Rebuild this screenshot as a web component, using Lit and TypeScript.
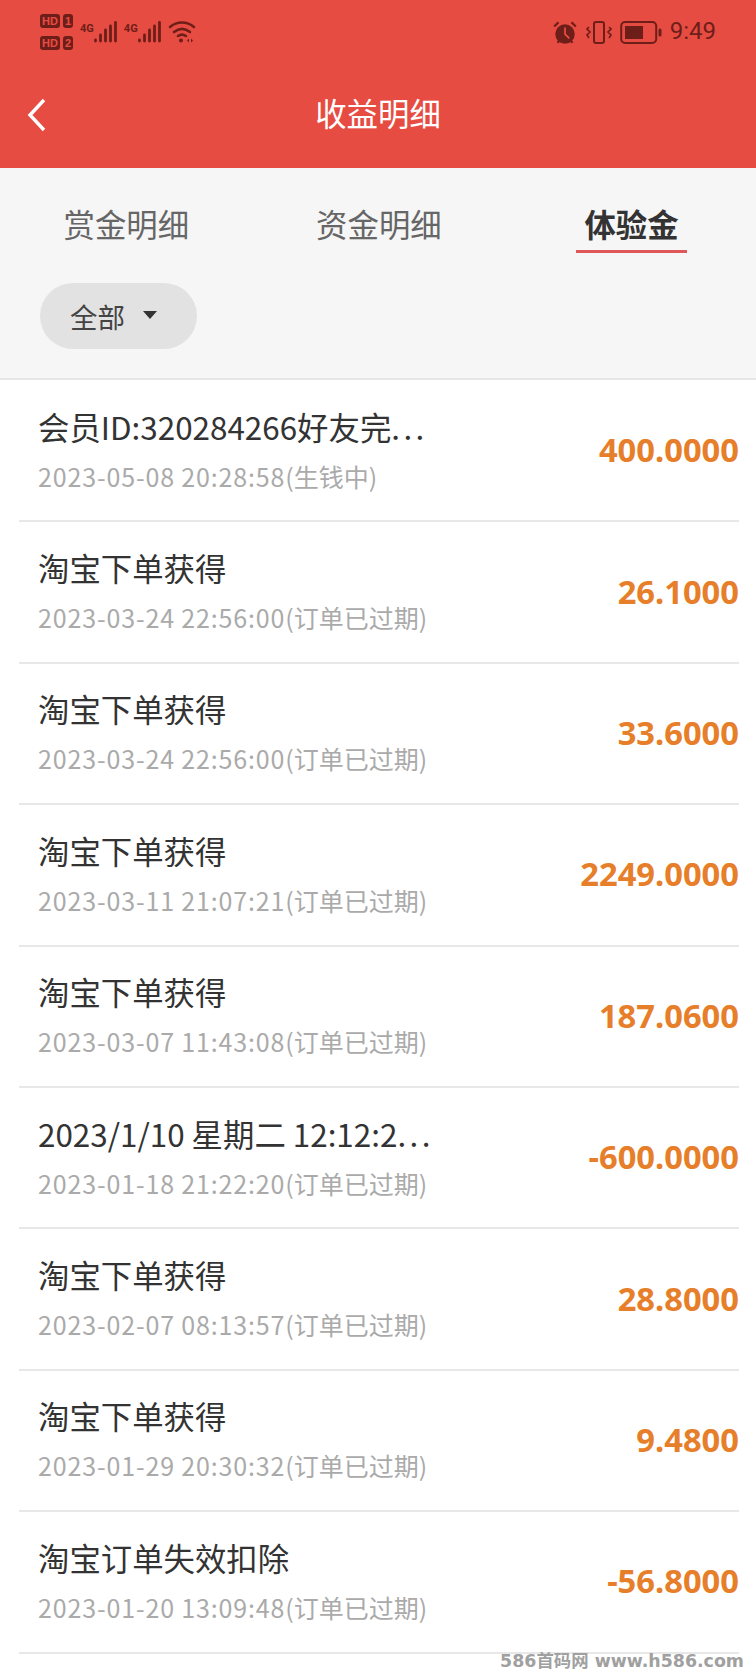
import { LitElement, html, css, svg } from "lit";
import { customElement } from "lit/decorators.js";

const rows: [string, string, string, string, boolean][] = [
  ["会员ID:320284266好友完", "2023-05-08 20:28:58", "(生钱中)", "400.0000", true],
  ["淘宝下单获得", "2023-03-24 22:56:00", "(订单已过期)", "26.1000", false],
  ["淘宝下单获得", "2023-03-24 22:56:00", "(订单已过期)", "33.6000", false],
  ["淘宝下单获得", "2023-03-11 21:07:21", "(订单已过期)", "2249.0000", false],
  ["淘宝下单获得", "2023-03-07 11:43:08", "(订单已过期)", "187.0600", false],
  ["2023/1/10 星期二 12:12:2", "2023-01-18 21:22:20", "(订单已过期)", "-600.0000", true],
  ["淘宝下单获得", "2023-02-07 08:13:57", "(订单已过期)", "28.8000", false],
  ["淘宝下单获得", "2023-01-29 20:30:32", "(订单已过期)", "9.4800", false],
  ["淘宝订单失效扣除", "2023-01-20 13:09:48", "(订单已过期)", "-56.8000", false],
];

const bars = svg`<path d="M1.5 20v-1M6.5 20v-6M11.5 20V9M16.5 20V5M21.5 20V1.5" fill="none" stroke="#6e1e18" stroke-width="2.8" stroke-linecap="round"/>`;

@customElement("app-root")
export class AppRoot extends LitElement {
  static styles = css`
    :host { display: block; width: 756px; height: 1680px; overflow: hidden; position: relative; background: #fff;
      font-family: "Noto Sans CJK SC", "Noto Sans", sans-serif; }
    .head { height: 168px; background: #e74c43; display: flex; flex-direction: column; }
    .status { height: 90px; display: flex; justify-content: space-between; padding: 12px 40px 0 40px; box-sizing: border-box; color: #6e1e18; }
    .sl, .sr { display: flex; height: 42px; }
    .sl { gap: 7px; }
    .sr { gap: 8px; padding-top: 9px; align-items: flex-start; }
    .hd { display: flex; flex-direction: column; gap: 8px; margin-top: 2px; }
    .hdrow { display: flex; gap: 3px; }
    .hdrow span { background: #6e1e18; color: #e74c43; font: 700 11px/14px "Liberation Sans Narrow", "Liberation Sans", sans-serif; border-radius: 3px; padding: 0 2px; min-width: 6px; text-align: center; }
    .sig { display: flex; align-items: flex-start; gap: 0; padding-top: 8px; }
    .sig b { font: 700 11px/13px "Roboto", sans-serif; color: #6e1e18; margin-top: 2px; }
    .sig svg { margin-top: 1px; }
    .wifi { margin-top: 8px; }
    .time { font: 400 24px/24px "Roboto", sans-serif; color: #6e1e18; margin-top: -2px; }
    .alarm { margin-top: -1px; margin-left: -2px; }
    .nav { flex: 1; display: flex; align-items: flex-start; justify-content: center; position: relative; color: #fff; font-size: 31.4px; line-height: 46px; }
    .back { position: absolute; left: 26px; top: 6px; }
    .tabs { height: 210px; background: #f6f6f6; border-bottom: 2px solid #e6e6e6; box-sizing: content-box; margin-bottom: 1px; }
    .tabrow { display: grid; grid-template-columns: repeat(3, 252.6px); height: 103px; box-sizing: border-box; padding: 33px 0 0 0; }
    .tab { display: flex; flex-direction: column; align-items: center; font-size: 31.4px; line-height: 46px; color: #666; }
    .tab.on { color: #333; font-weight: 700; }
    .tab.on i { display: block; width: 111px; height: 3px; margin-top: 3px; background: #e0575a; }
    .chip { margin: 12px 0 0 40px; width: 157px; height: 66px; border-radius: 33px; background: #e2e2e2; display: flex; align-items: center; gap: 18px; padding-left: 30px; box-sizing: border-box; font-size: 27.5px; color: #444; }
    .chip i { width: 0; height: 0; border-left: 7px solid transparent; border-right: 7px solid transparent; border-top: 8px solid #333; margin-top: -2px; }
    .row { height: 141.4px; margin: 0 17px 0 19px; border-bottom: 2px solid #e8e8e8; box-sizing: border-box; display: flex; align-items: center; justify-content: space-between; }
    .t { font-size: 31.4px; line-height: 46px; color: #333; white-space: nowrap; }
    .t span { letter-spacing: 3.4px; }
    .d { font-size: 25px; line-height: 36px; color: #aaa; margin-top: 8px; white-space: nowrap; }
    .d span { letter-spacing: 0.85px; }
    .l { padding-left: 19px; margin-top: -4px; }
    .a { font-size: 32.7px; font-weight: 700; color: #e67e2a; font-family: "Noto Sans", sans-serif; margin-top: -2px; }
    .mark { position: absolute; right: 12px; bottom: 9px; font: 700 17.4px/20px "DejaVu Sans", "Noto Sans CJK SC", sans-serif; color: #a0a0a0; }
  `;

  render() {
    return html`
      <div class="head">
        <div class="status">
          <div class="sl">
            <div class="hd">
              <div class="hdrow"><span>HD</span><span>1</span></div>
              <div class="hdrow"><span>HD</span><span>2</span></div>
            </div>
            <div class="sig"><b>4G</b><svg width="23" height="23" viewBox="0 0 23 23">${bars}</svg></div>
            <div class="sig"><b>4G</b><svg width="23" height="23" viewBox="0 0 23 23">${bars}</svg></div>
            <svg class="wifi" width="28" height="24" viewBox="0 0 28 24" fill="none" stroke="#6e1e18" stroke-width="2.6" stroke-linecap="round">
              <path d="M2 7c7-6 17-6 24 0M6 12c5-4 11-4 16 0M10 16c3-2 5-2 8 0"/>
              <circle cx="13" cy="20.5" r="2" fill="#6e1e18" stroke="none"/>
              <path d="M21 18.5l-2 2 2 2zM23 18.5l2 2-2 2z" fill="#6e1e18" stroke="none"/>
            </svg>
          </div>
          <div class="sr">
            <svg class="alarm" width="26" height="26" viewBox="0 0 24 24"><circle cx="12" cy="13" r="9" fill="#6e1e18"/>
              <path d="M2 6l4-4M22 6l-4-4M5 21l2-2M19 21l-2-2" stroke="#6e1e18" stroke-width="2" fill="none"/>
              <path d="M12 7v6l4 4" stroke="#e74c43" stroke-width="1.6" fill="none"/></svg>
            <svg width="26" height="24" viewBox="0 0 26 24" fill="none" stroke="#6e1e18" stroke-width="2">
              <rect x="8" y="1" width="10" height="21" rx="2"/>
              <path d="M3 6l-2 2 3 3-3 3 2 3M23 6l2 2-3 3 3 3-2 3" stroke-width="1.6"/></svg>
            <svg width="42" height="24" viewBox="0 0 42 24"><rect x="1.2" y="1" width="35" height="21" rx="4" fill="none" stroke="#6e1e18" stroke-width="2"/>
              <rect x="5" y="5" width="18" height="13" fill="#6e1e18"/><rect x="38.5" y="7.5" width="3" height="8" rx="1.5" fill="#6e1e18"/></svg>
            <span class="time">9:49</span>
          </div>
        </div>
        <div class="nav">
          <svg class="back" width="22" height="36" viewBox="0 0 22 36" fill="none" stroke="#fff" stroke-width="3.4"><path d="M18 4L4 19l14 15"/></svg>
          收益明细
        </div>
      </div>
      <div class="tabs">
        <div class="tabrow">
          <div class="tab">赏金明细</div>
          <div class="tab">资金明细</div>
          <div class="tab on">体验金<i></i></div>
        </div>
        <div class="chip">全部<i></i></div>
      </div>
      ${rows.map(([t, d, s, a, cut]) => html`
        <div class="row">
          <div class="l"><div class="t">${t}${cut ? html`<span>...</span>` : ""}</div><div class="d"><span>${d}</span>${s}</div></div>
          <div class="a">${a}</div>
        </div>`)}
      <div class="mark">586首码网 www.h586.com</div>
    `;
  }
}
